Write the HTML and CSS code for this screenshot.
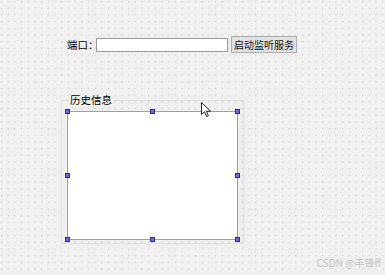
FILE: index.html
```html
<!DOCTYPE html>
<html lang="zh">
<head>
    <meta charset="UTF-8">
    <title>Form</title>
    <link rel="stylesheet" href="styles.css">
</head>
<body>

<div class="form">
    <div class="port-row">
        <span class="port-label">端口：</span>
        <input class="port-input" type="text">
        <button class="start-button">启动监听服务</button>
    </div>

    <div class="group">
        <span class="group-title">历史信息</span>
        <div class="history">
            <div class="handle h-tl"></div>
            <div class="handle h-tc"></div>
            <div class="handle h-tr"></div>
            <div class="handle h-ml"></div>
            <div class="handle h-mr"></div>
            <div class="handle h-bl"></div>
            <div class="handle h-bc"></div>
            <div class="handle h-br"></div>
        </div>
    </div>
</div>

<svg class="cursor" width="11" height="16" viewBox="0 0 11 16">
    <path d="M0.5 0.5 L0.5 12.5 L3.5 9.8 L5.6 14.6 L7.4 13.8 L5.4 9.2 L9.5 9.2 Z" fill="#fff" stroke="#222" stroke-width="1"/>
</svg>

<div class="watermark">CSDN @丰锋ff</div>

</body>
</html>
```

FILE: styles.css
```css
* {
    margin: 0;
    padding: 0;
    box-sizing: border-box;
}

body {
    width: 385px;
    height: 275px;
    overflow: hidden;
    position: relative;
    font-family: "Noto Sans CJK SC", "Noto Sans", sans-serif;
    font-size: 10.5px;
    color: #000;
    background-color: #f0f0f0;
    background-image: radial-gradient(circle at 1.5px 1.5px, #cdcdcd 0.6px, transparent 1px);
    background-size: 6.7px 6.7px;
}

.form {
    padding: 36px 0 0 61px;
}

.port-row {
    display: flex;
    align-items: center;
    height: 17px;
    margin-left: 6px;
    white-space: nowrap;
}

.port-label {
    flex-shrink: 0;
    width: 29px;
    line-height: 17px;
}

.port-input {
    flex-shrink: 0;
    width: 132px;
    height: 14px;
    border: 1px solid #9a9a9a;
    background: #fff;
    outline: none;
    margin-right: 3px;
}

.start-button {
    flex-shrink: 0;
    width: 66px;
    height: 17px;
    padding: 0;
    border: 1px solid #adadad;
    background: #e1e1e1;
    font-family: inherit;
    font-size: 10px;
    color: #111;
    line-height: 15px;
    white-space: nowrap;
}

.group {
    position: relative;
    width: 183px;
    height: 144px;
    margin-top: 47px;
    border: 1px solid #e0e0e0;
    padding: 10px 0 0 5px;
}

.group-title {
    position: absolute;
    top: -8px;
    left: 7px;
    padding: 0 1px;
    line-height: 14px;
    background: #f0f0f0;
}

.history {
    position: relative;
    width: 171px;
    height: 129px;
    background: #fff;
    border: 1px solid #a0a0a0;
}

.handle {
    position: absolute;
    width: 5px;
    height: 5px;
    background: #6a6ae8;
    border: 1px solid #2a2a9a;
}

.h-tl { top: -3px; left: -3px; }
.h-tc { top: -3px; left: 82px; }
.h-tr { top: -3px; right: -3px; }
.h-ml { top: 61px; left: -3px; }
.h-mr { top: 61px; right: -3px; }
.h-bl { bottom: -3px; left: -3px; }
.h-bc { bottom: -3px; left: 82px; }
.h-br { bottom: -3px; right: -3px; }

.cursor {
    position: absolute;
    left: 201px;
    top: 102px;
}

.watermark {
    position: absolute;
    right: 4px;
    bottom: 5px;
    font-size: 10px;
    color: #c4c4c4;
}
```
